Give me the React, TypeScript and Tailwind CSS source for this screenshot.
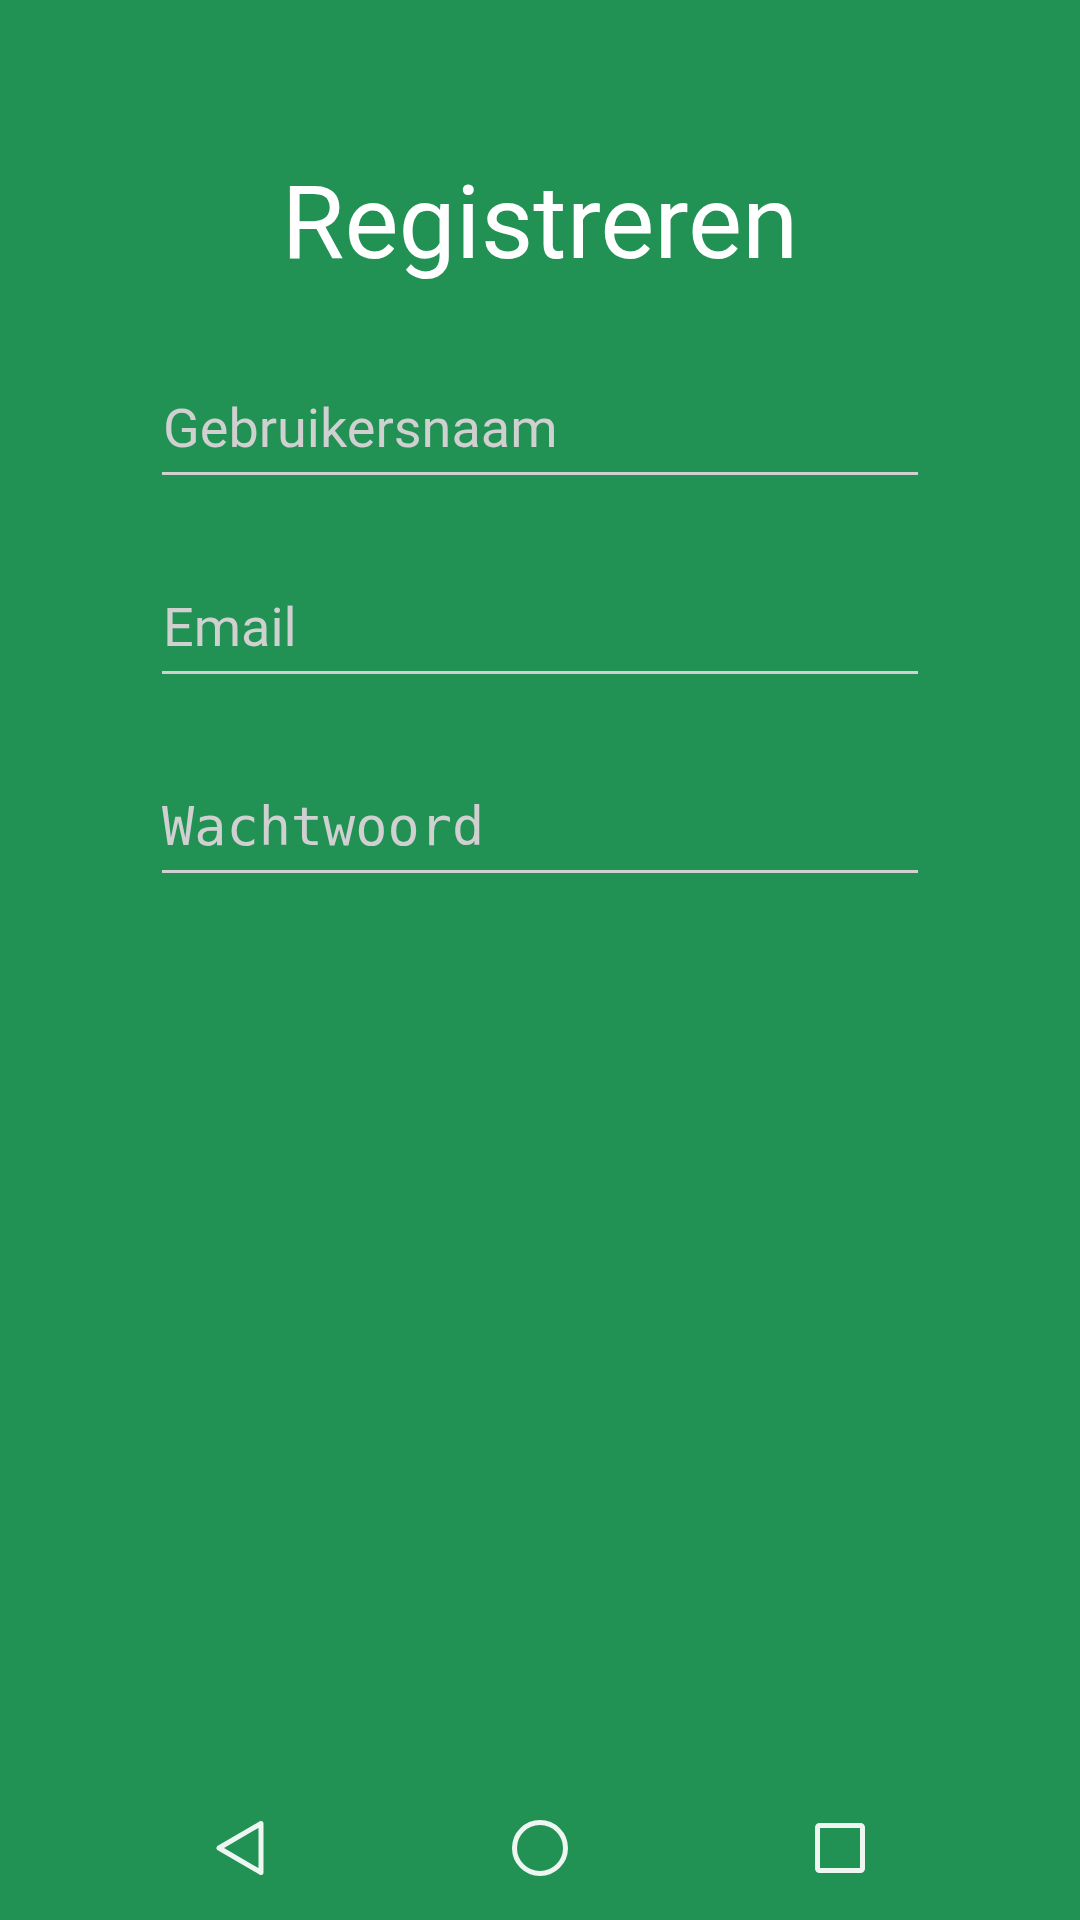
import React from "react";

const fields = [
  { label: "Gebruikersnaam", mono: false },
  { label: "Email", mono: false },
  { label: "Wachtwoord", mono: true },
];

function NavBar() {
  return (
    <div className="h-[144px] flex justify-center items-start pt-[44px] gap-[200px]">
      <div className="w-[100px] flex justify-center">
        <svg width="56" height="56" viewBox="0 0 56 56" fill="none">
          <path d="M7 28 L49 3.5 L49 52.5 Z" stroke="#eef6f1" strokeWidth="5" strokeLinejoin="round" />
        </svg>
      </div>
      <div className="w-[100px] flex justify-center">
        <svg width="56" height="56" viewBox="0 0 56 56" fill="none">
          <circle cx="28" cy="28" r="25.5" stroke="#eef6f1" strokeWidth="5" />
        </svg>
      </div>
      <div className="w-[100px] flex justify-center">
        <svg width="56" height="56" viewBox="0 0 56 56" fill="none">
          <rect x="5.5" y="5.5" width="45" height="45" rx="2" stroke="#eef6f1" strokeWidth="5" />
        </svg>
      </div>
    </div>
  );
}

export default function App() {
  return (
    <main className="w-[1080px] h-[1920px] bg-[#219254] flex flex-col font-['Roboto',sans-serif]">
      <div className="pt-[172px] text-center text-white text-[102px] leading-[102px]">
        Registreren
      </div>

      <form className="flex flex-col px-[162px] pt-[129px] gap-[127px]" onSubmit={(e) => e.preventDefault()}>
        {fields.map((f) => (
          <div key={f.label} className="flex flex-col">
            <div
              className={
                f.mono
                  ? "pl-[0px] text-[53.5px] leading-[52px] text-[#d0d0d0] font-['DejaVu_Sans_Mono',monospace]"
                  : "pl-[1px] text-[54px] leading-[52px] text-[#d0d0d0]"
              }
            >
              {f.label}
            </div>
            <div className="mt-[17px] h-[3px] bg-[#d0d0d0]" />
          </div>
        ))}
      </form>

      <div className="flex-1" />
      <NavBar />
    </main>
  );
}
